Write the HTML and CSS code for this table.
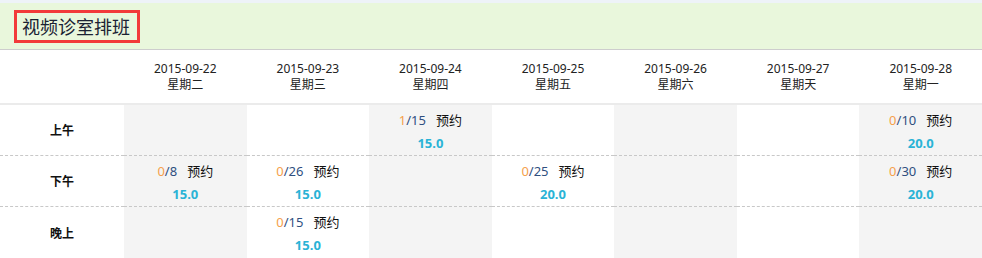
FILE: index.html
```html
<!DOCTYPE html>
<html lang="zh">
<head>
<meta charset="utf-8">
<link rel="stylesheet" href="styles.css">
</head>
<body>
<div class="topbar"></div>
<div class="header"><h1 class="title">视频诊室排班</h1></div>
<div class="grid">
  <div class="hcell"></div>
  <div class="hcell">2015-09-22<br>星期二</div>
  <div class="hcell">2015-09-23<br>星期三</div>
  <div class="hcell">2015-09-24<br>星期四</div>
  <div class="hcell">2015-09-25<br>星期五</div>
  <div class="hcell">2015-09-26<br>星期六</div>
  <div class="hcell">2015-09-27<br>星期天</div>
  <div class="hcell">2015-09-28<br>星期一</div>

  <div class="label dash">上午</div>
  <div class="cell dash shade"></div>
  <div class="cell dash"></div>
  <div class="cell dash shade"><div class="slot"><span class="used">1</span>/15<span class="book">预约</span></div><div class="price">15.0</div></div>
  <div class="cell dash"></div>
  <div class="cell dash shade"></div>
  <div class="cell dash"></div>
  <div class="cell dash shade"><div class="slot"><span class="used">0</span>/10<span class="book">预约</span></div><div class="price">20.0</div></div>

  <div class="label dash">下午</div>
  <div class="cell dash shade"><div class="slot"><span class="used">0</span>/8<span class="book">预约</span></div><div class="price">15.0</div></div>
  <div class="cell dash"><div class="slot"><span class="used">0</span>/26<span class="book">预约</span></div><div class="price">15.0</div></div>
  <div class="cell dash shade"></div>
  <div class="cell dash"><div class="slot"><span class="used">0</span>/25<span class="book">预约</span></div><div class="price">20.0</div></div>
  <div class="cell dash shade"></div>
  <div class="cell dash"></div>
  <div class="cell dash shade"><div class="slot"><span class="used">0</span>/30<span class="book">预约</span></div><div class="price">20.0</div></div>

  <div class="label">晚上</div>
  <div class="cell shade"></div>
  <div class="cell"><div class="slot"><span class="used">0</span>/15<span class="book">预约</span></div><div class="price">15.0</div></div>
  <div class="cell shade"></div>
  <div class="cell"></div>
  <div class="cell shade"></div>
  <div class="cell"></div>
  <div class="cell shade"></div>
</div>
</body>
</html>
```

FILE: styles.css
```css
* { box-sizing: border-box; }
html, body { margin: 0; padding: 0; background: #fff; }
body {
  font-family: "Noto Sans", "Noto Sans CJK SC", sans-serif;
  color: #222;
  width: 982px;
  overflow: hidden;
}
.topbar { height: 3px; background: #eef3f8; }
.header {
  height: 47px;
  background: #e9f7dc;
  border-bottom: 1px solid #cdcdcd;
  padding: 7px 0 0 14px;
}
.title {
  margin: 0;
  display: inline-block;
  height: 33px;
  padding: 0 7px 0 5px;
  border: 3px solid #f23a3a;
  font-family: "Noto Sans CJK SC", sans-serif;
  font-weight: normal;
  font-size: 18px;
  line-height: 27px;
  color: #1a2233;
}
.grid {
  display: grid;
  grid-template-columns: 124px repeat(7, 1fr);
}
.hcell {
  height: 55px;
  padding-top: 11px;
  border-bottom: 2px solid #ebebeb;
  text-align: center;
  font-size: 12px;
  line-height: 16px;
  color: #222;
}
.label {
  height: 51px;
  display: flex;
  align-items: center;
  justify-content: center;
  font-size: 12px;
  font-weight: bold;
  color: #111;
}
.cell {
  height: 51px;
  padding-top: 4px;
  text-align: center;
  font-size: 13px;
  line-height: 23px;
}
.dash {
  border-bottom: 1px dashed #c8c8c8;
}
.shade { background: #f4f4f4; }
.slot { color: #2f4f7f; }
.used { color: #f5a04a; }
.book { color: #111; margin-left: 10px; }
.price {
  color: #2ab3d6;
  font-weight: bold;
}
```
